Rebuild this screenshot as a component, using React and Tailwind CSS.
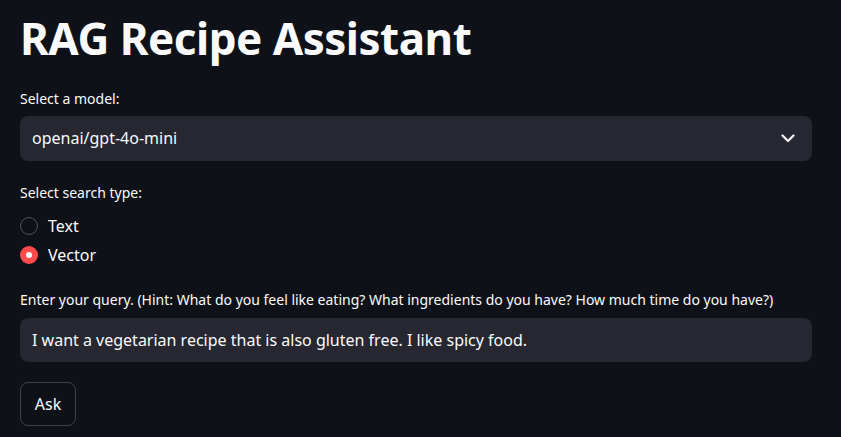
import { useState } from 'react';

const App = () => {
  const [model] = useState('openai/gpt-4o-mini');
  const [searchType, setSearchType] = useState('Vector');
  const [query, setQuery] = useState('I want a vegetarian recipe that is also gluten free. I like spicy food.');

  return (
    <div className="min-h-screen w-full bg-[#0e1117] text-[#fafafa] font-['Noto_Sans',sans-serif]">
      <div className="px-5 pt-3">
        {/* Title */}
        <h1 className="text-[44px] font-bold leading-[1.2] tracking-[-0.5px]">RAG Recipe Assistant</h1>

        {/* Model select */}
        <div className="mt-6">
          <label className="block text-sm leading-5 mb-[7px]">Select a model:</label>
          <div className="flex items-center justify-between h-[45px] rounded-lg bg-[#262730] pl-3 pr-3 w-[792px]">
            <span className="text-base">{model}</span>
            <svg width="24" height="24" viewBox="0 0 24 24" fill="none" stroke="#fafafa" strokeWidth="2.2" strokeLinecap="round" strokeLinejoin="round">
              <path d="M6.5 9.5l5.5 5.5 5.5-5.5" />
            </svg>
          </div>
        </div>

        {/* Search type */}
        <div className="mt-[22px]">
          <label className="block text-sm leading-5 mb-[13px]">Select search type:</label>
          <div className="flex flex-col gap-[9px]">
            {['Text', 'Vector'].map((opt) => (
              <button key={opt} onClick={() => setSearchType(opt)} className="flex items-center gap-[10px] h-[20px]">
                {searchType === opt ? (
                  <span className="flex items-center justify-center w-[18px] h-[18px] rounded-full bg-[#ff4b4b]">
                    <span className="w-[6px] h-[6px] rounded-full bg-white" />
                  </span>
                ) : (
                  <span className="w-[18px] h-[18px] rounded-full border border-[#50525c]" />
                )}
                <span className="text-base">{opt}</span>
              </button>
            ))}
          </div>
        </div>

        {/* Query */}
        <div className="mt-[25px]">
          <label className="block text-sm leading-5 mb-2">
            Enter your query. (Hint: What do you feel like eating? What ingredients do you have? How much time do you have?)
          </label>
          <input
            value={query}
            onChange={(e) => setQuery(e.target.value)}
            className="w-[792px] h-[44px] rounded-lg bg-[#262730] px-3 text-base outline-none"
          />
        </div>

        {/* Ask button */}
        <button className="mt-5 flex items-center justify-center h-[44px] w-[56px] rounded-lg border border-[#fafafa33] text-base">
          Ask
        </button>
      </div>
    </div>
  );
};

export default App;
